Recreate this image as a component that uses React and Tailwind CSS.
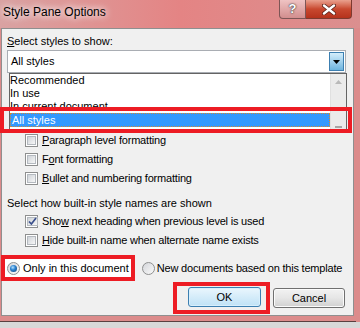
import React from 'react';

const Check = ({ checked }) => (
  <span className="w-[13px] h-[13px] shrink-0 border border-[#8e8f8f] bg-white p-[1px] flex">
    <span className="flex-1 border border-[#b4b9bf] bg-gradient-to-br from-[#cfd3d8] to-[#f7f7f7] flex items-center justify-center">
      {checked && (
        <svg width="9" height="9" viewBox="0 0 9 9">
          <path d="M1 4.5 L3.4 7 L8 1" fill="none" stroke="#3a4f8c" strokeWidth="1.7" />
        </svg>
      )}
    </span>
  </span>
);

const Radio = ({ selected }) => (
  <span className="w-[13px] h-[13px] shrink-0 rounded-full border border-[#8e8f8f] bg-gradient-to-br from-[#d4d6da] to-[#fafafa] flex items-center justify-center">
    {selected && (
      <span className="w-[7px] h-[7px] rounded-full bg-[radial-gradient(circle_at_40%_35%,#b6e2ff_0%,#2c83d1_40%,#0c3a70_100%)]" />
    )}
  </span>
);

const Row = ({ checked, children }) => (
  <div className="h-[19px] flex items-center pl-[23px] gap-[4px]">
    <Check checked={checked} />
    <span className="tracking-[-0.2px]">{children}</span>
  </div>
);

export default function App() {
  return (
    <div className="w-[360px] h-[328px] relative overflow-hidden bg-[#dc8b8b] flex flex-col font-['Liberation_Sans',Arial,sans-serif] text-[11px] text-black">
      {/* title bar */}
      <div className="h-[28px] shrink-0 flex items-start bg-gradient-to-r from-[#d9a2a2] via-[#e48484] to-[#db8f8f]">
        <div className="pl-[3px] pt-[5px] text-[12px] leading-[14px] [text-shadow:0_0_6px_#fff,0_0_10px_#fff]">Style Pane Options</div>
        <div className="ml-auto mr-[8px] flex">
          <div className="w-[27px] h-[19px] rounded-bl-[4px] border border-t-0 border-[#7d5656] bg-gradient-to-b from-[#efc3c3] to-[#d28e8e] flex items-center justify-center text-[13px] font-bold text-white [text-shadow:0_0_1px_#333,0_0_2px_#333]">?</div>
          <div className="w-[46px] h-[19px] rounded-br-[4px] border border-l-0 border-t-0 border-[#7d3a30] bg-gradient-to-b from-[#e9a08e] via-[#c8482f] to-[#b5321c] flex items-center justify-center">
            <svg width="14" height="11" viewBox="0 0 14 11">
              <path d="M2 1.5 L12 9.5 M12 1.5 L2 9.5" stroke="#5a2218" strokeWidth="4" strokeLinecap="round" />
              <path d="M2 1.5 L12 9.5 M12 1.5 L2 9.5" stroke="#fff" strokeWidth="2.4" strokeLinecap="round" />
            </svg>
          </div>
        </div>
      </div>

      {/* dialog body */}
      <div className="ml-[1px] w-[353px] h-[288px] shrink-0 border border-[#8f8f8f] bg-[#f0f0f0] flex flex-col">
        <div className="h-[21px] pt-[5px] pl-[5px] leading-[15px]">
          <u>S</u>elect styles to show:
        </div>

        <div className="relative ml-[5px] w-[339px] h-[23px] border border-[#a9adb3] bg-white flex items-center">
          <span className="pl-[3px]">All styles</span>
          <div className="ml-auto self-stretch m-[1px] w-[15px] border border-[#3c7fb1] bg-gradient-to-b from-[#d4eefb] to-[#6db4de] flex items-center justify-center">
            <svg width="7" height="4" viewBox="0 0 7 4">
              <polygon points="0,0 7,0 3.5,4" fill="#000" />
            </svg>
          </div>

          {/* open list */}
          <div className="absolute left-[1px] top-[22px] w-[338px] h-[58px] border border-[#646464] bg-white z-10 flex">
            <div className="flex-1 flex flex-col">
              <div className="h-[13px] leading-[13px]">Recommended</div>
              <div className="h-[13px] leading-[13px]">In use</div>
              <div className="h-[13px] leading-[13px]">In current document</div>
              <div className="h-[14px] leading-[12px] bg-[#3399ff] text-white border border-dotted border-[#d9882f] pl-[1px]">All styles</div>
            </div>
            <div className="w-[16px] bg-[#ebebeb] border-l border-[#e0e0e0] flex flex-col items-center justify-between pt-[6px] pb-[2px]">
              <svg width="7" height="4" viewBox="0 0 7 4">
                <polygon points="0,4 7,4 3.5,0" fill="#b9b9b9" />
              </svg>
              <div className="w-[7px] h-[2px] bg-[#a6a6a6]" />
            </div>
          </div>
        </div>

        {/* space behind the open list */}
        <div className="h-[58px]" />

        <Row><u>P</u>aragraph level formatting</Row>
        <Row>F<u>o</u>nt formatting</Row>
        <Row><u>B</u>ullet and numbering formatting</Row>

        <div className="h-[24px] pt-[8px] pl-[5px] leading-[15px]">Select how built-in style names are shown</div>
        <Row checked>Sho<u>w</u> next heading when previous level is used</Row>
        <Row><u>H</u>ide built-in name when alternate name exists</Row>

        <div className="mt-[5px] h-[26px] flex items-center">
          <div className="-ml-[1px] h-[26px] border-4 border-[#ed1c24] bg-white flex items-center pl-[2px] pr-[2px] gap-[3px]">
            <Radio selected />
            <span>Only in this document</span>
          </div>
          <div className="ml-[7px] flex items-center gap-[2px]">
            <Radio />
            <span className="tracking-[-0.2px]">New documents based on this template</span>
          </div>
        </div>

        <div className="mt-[1px] flex items-center justify-end pr-[8px]">
          <div className="border-4 border-[#ed1c24] pt-[1px] pb-[3px] pl-[11px] pr-[5px]">
            <button className="w-[73px] h-[20px] rounded-[3px] border border-[#3c7fb1] bg-gradient-to-b from-[#eaf6fd] to-[#bfe2f6] shadow-[inset_0_0_0_1px_#d8effc]">OK</button>
          </div>
          <button className="ml-[3px] w-[72px] h-[20px] rounded-[3px] border border-[#707070] bg-gradient-to-b from-[#f2f2f2] via-[#e6e6e6] to-[#d0d0d0] shadow-[inset_0_0_0_1px_#fbfbfb]">Cancel</button>
        </div>
      </div>

      {/* bottom frame */}
      <div className="h-[5px] shrink-0" />
      <div className="h-[1px] w-[356px] shrink-0 bg-[#5a4040]" />
      <div className="flex-1 bg-[#d8d8d8]" />

      {/* annotation box round the selected list item */}
      <div className="absolute left-0 top-[107px] w-[352px] h-[26px] border-4 border-[#ed1c24] z-20 pointer-events-none" />
    </div>
  );
}
